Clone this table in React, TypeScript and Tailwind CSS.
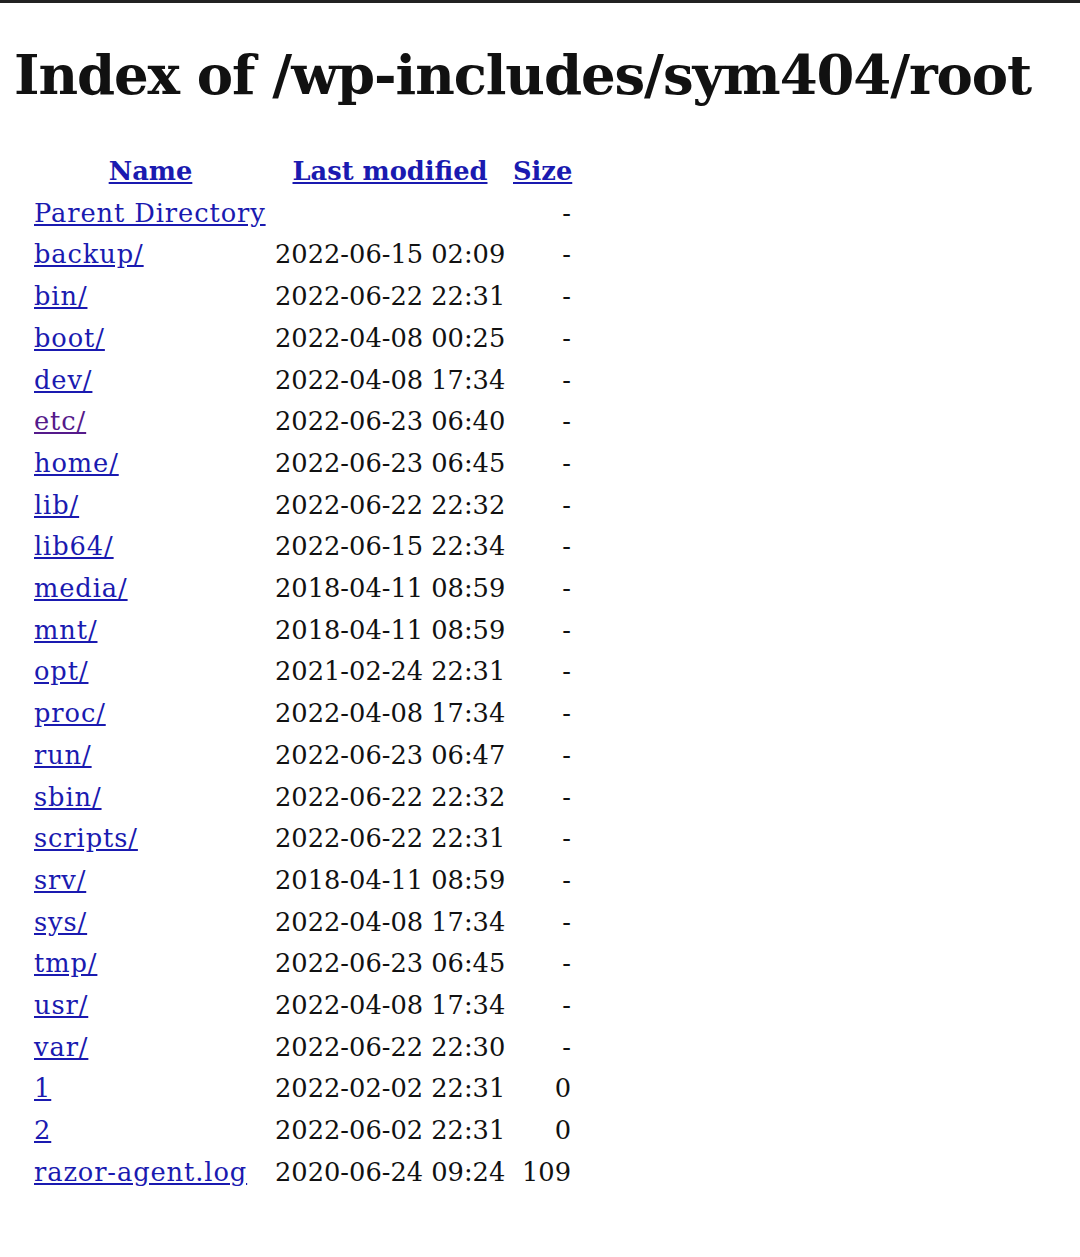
const rows: [string, string, string, boolean?][] = [
  ["backup/", "2022-06-15 02:09", "-"],
  ["bin/", "2022-06-22 22:31", "-"],
  ["boot/", "2022-04-08 00:25", "-"],
  ["dev/", "2022-04-08 17:34", "-"],
  ["etc/", "2022-06-23 06:40", "-", true],
  ["home/", "2022-06-23 06:45", "-"],
  ["lib/", "2022-06-22 22:32", "-"],
  ["lib64/", "2022-06-15 22:34", "-"],
  ["media/", "2018-04-11 08:59", "-"],
  ["mnt/", "2018-04-11 08:59", "-"],
  ["opt/", "2021-02-24 22:31", "-"],
  ["proc/", "2022-04-08 17:34", "-"],
  ["run/", "2022-06-23 06:47", "-"],
  ["sbin/", "2022-06-22 22:32", "-"],
  ["scripts/", "2022-06-22 22:31", "-"],
  ["srv/", "2018-04-11 08:59", "-"],
  ["sys/", "2022-04-08 17:34", "-"],
  ["tmp/", "2022-06-23 06:45", "-"],
  ["usr/", "2022-04-08 17:34", "-"],
  ["var/", "2022-06-22 22:30", "-"],
  ["1", "2022-02-02 22:31", "0"],
  ["2", "2022-06-02 22:31", "0"],
  ["razor-agent.log", "2020-06-24 09:24", "109"],
];

export default function App() {
  return (
    <div className="min-h-screen bg-white text-[#111] font-['DejaVu_Serif','Liberation_Serif',serif]">
      <div className="h-[3px] bg-[#222222]" />

      <h1 className="pl-[14px] pt-[40px] text-[54.5px] leading-[64px] font-bold tracking-[-0.02em]">
        Index of /wp-includes/sym404/root
      </h1>

      <div className="ml-[34px] mt-[44px] grid grid-cols-[233px_230px_58px] gap-x-[8px] text-[25.7px] leading-[41.7px]">
        <a href="#" className="text-center font-bold text-[#1a1ab0] underline">Name</a>
        <a href="#" className="text-center font-bold text-[#1a1ab0] underline">Last modified</a>
        <a href="#" className="text-center font-bold text-[#1a1ab0] underline">Size</a>

        <a href="#" className="justify-self-start whitespace-nowrap tracking-[0.035em] text-[#1a1ab0] underline">
          Parent Directory
        </a>
        <span />
        <span className="text-right">-</span>

        {rows.map(([name, date, size, visited]) => (
          <div key={name} className="contents">
            <a
              href="#"
              className={
                "justify-self-start whitespace-nowrap tracking-[0.035em] underline " +
                (visited ? "text-[#551a8b]" : "text-[#1a1ab0]")
              }
            >
              {name}
            </a>
            <span className="whitespace-nowrap">{date}</span>
            <span className="text-right">{size}</span>
          </div>
        ))}
      </div>
    </div>
  );
}
